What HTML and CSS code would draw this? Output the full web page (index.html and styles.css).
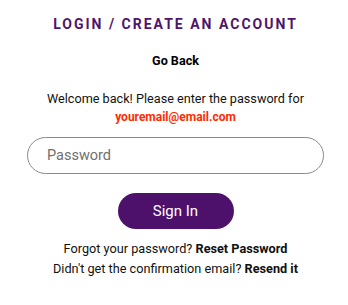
FILE: index.html
```html
<!DOCTYPE html>
<html>
<head>
<meta charset="utf-8">
<link rel="stylesheet" href="styles.css">
</head>
<body>
<div class="panel">
  <h1 class="title">LOGIN / CREATE AN ACCOUNT</h1>
  <a class="back">Go Back</a>
  <p class="welcome">Welcome back! Please enter the password for</p>
  <p class="email">youremail@email.com</p>
  <input class="field" type="password" placeholder="Password">
  <button class="signin">Sign In</button>
  <p class="help">Forgot your password? <b>Reset Password</b></p>
  <p class="help">Didn't get the confirmation email? <b>Resend it</b></p>
</div>
</body>
</html>
```
FILE: styles.css
```css
html, body { margin: 0; padding: 0; background: #fff; }
body { font-family: Roboto, "Noto Sans", sans-serif; color: #111; }
.panel {
  box-sizing: border-box;
  width: 348px;
  display: flex;
  flex-direction: column;
  align-items: center;
  padding: 15px 0 0 3px;
}
.title {
  margin: 0;
  font-size: 14px;
  font-weight: 700;
  letter-spacing: 2px;
  color: #4e1470;
  line-height: 18px;
}
.back {
  margin-top: 20px;
  font-size: 12.6px;
  font-weight: 700;
  line-height: 16px;
  color: #000;
}
.welcome {
  margin: 21px 0 0;
  font-size: 12.65px;
  line-height: 17px;
}
.email {
  margin: 2px 0 0;
  font-size: 12px;
  font-weight: 700;
  color: #ff2b00;
  line-height: 17px;
}
.field {
  margin-top: 11px;
  box-sizing: border-box;
  width: 297px;
  height: 37px;
  border: 1px solid #8a8a8a;
  border-radius: 19px;
  padding: 0 19px;
  font-family: Roboto, sans-serif;
  font-size: 14.5px;
  outline: none;
}
.field::placeholder { color: #707070; }
.signin {
  margin-top: 19px;
  width: 116px;
  height: 36px;
  border: none;
  border-radius: 18px;
  background: #4e116b;
  color: #fff;
  font-family: Roboto, sans-serif;
  font-size: 15px;
}
.help {
  margin: 0;
  font-size: 12.7px;
  line-height: 20px;
}
.signin + .help { margin-top: 10px; }
.help b { font-weight: 700; }
```
